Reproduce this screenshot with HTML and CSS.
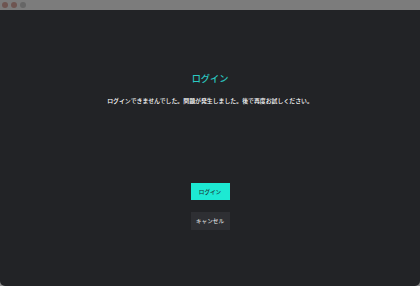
FILE: index.html
```html
<!DOCTYPE html>
<html lang="ja">
<head>
    <meta charset="UTF-8">
    <title>ログイン</title>
    <link rel="stylesheet" href="styles.css">
</head>
<body>
    <div class="window">
        <div class="titlebar">
            <span class="dot dot-close"></span>
            <span class="dot dot-min"></span>
            <span class="dot dot-max"></span>
        </div>
        <div class="content">
            <h1 class="title">ログイン</h1>
            <p class="message">ログインできませんでした。問題が発生しました。後で再度お試しください。</p>
            <div class="actions">
                <button class="btn btn-primary">ログイン</button>
                <button class="btn btn-secondary">キャンセル</button>
            </div>
        </div>
    </div>
</body>
</html>
```

FILE: styles.css
```css
*{
    margin: 0;
    padding: 0;
    box-sizing: border-box;
}
html,body{
    width: 420px;
    height: 286px;
    overflow: hidden;
}
body{
    background: #8a8a8a;
    font-family: "Noto Sans CJK JP", "Noto Sans", sans-serif;
}
.window{
    width: 420px;
    height: 286px;
    display: flex;
    flex-direction: column;
    background: #222326;
    border-radius: 0 0 5px 5px;
    overflow: hidden;
}
.titlebar{
    height: 10px;
    background: #7c7c7c;
    display: flex;
    align-items: center;
    gap: 3px;
    padding-left: 2px;
}
.dot{
    width: 6px;
    height: 6px;
    border-radius: 50%;
}
.dot-close,.dot-min{
    background: #6e5551;
}
.dot-max{
    background: #666;
}
.content{
    flex: 1;
    display: flex;
    flex-direction: column;
    align-items: center;
    padding-top: 61px;
}
.title{
    font-size: 9.2px;
    font-weight: 500;
    color: #2bc9c2;
    line-height: 14px;
}
.message{
    margin-top: 12px;
    font-size: 5.9px;
    font-weight: 500;
    color: #ffffff;
    line-height: 8px;
}
.actions{
    margin-top: 78px;
    display: flex;
    flex-direction: column;
    align-items: center;
    gap: 12px;
}
.btn{
    width: 39px;
    height: 17px;
    border: none;
    font-family: inherit;
    font-size: 5.6px;
    font-weight: 500;
    cursor: pointer;
}
.btn-primary{
    background: #1de9d3;
    color: #1a3a3a;
}
.btn-secondary{
    height: 18px;
    background: #2e2f33;
    color: #d8d8d8;
}
```
